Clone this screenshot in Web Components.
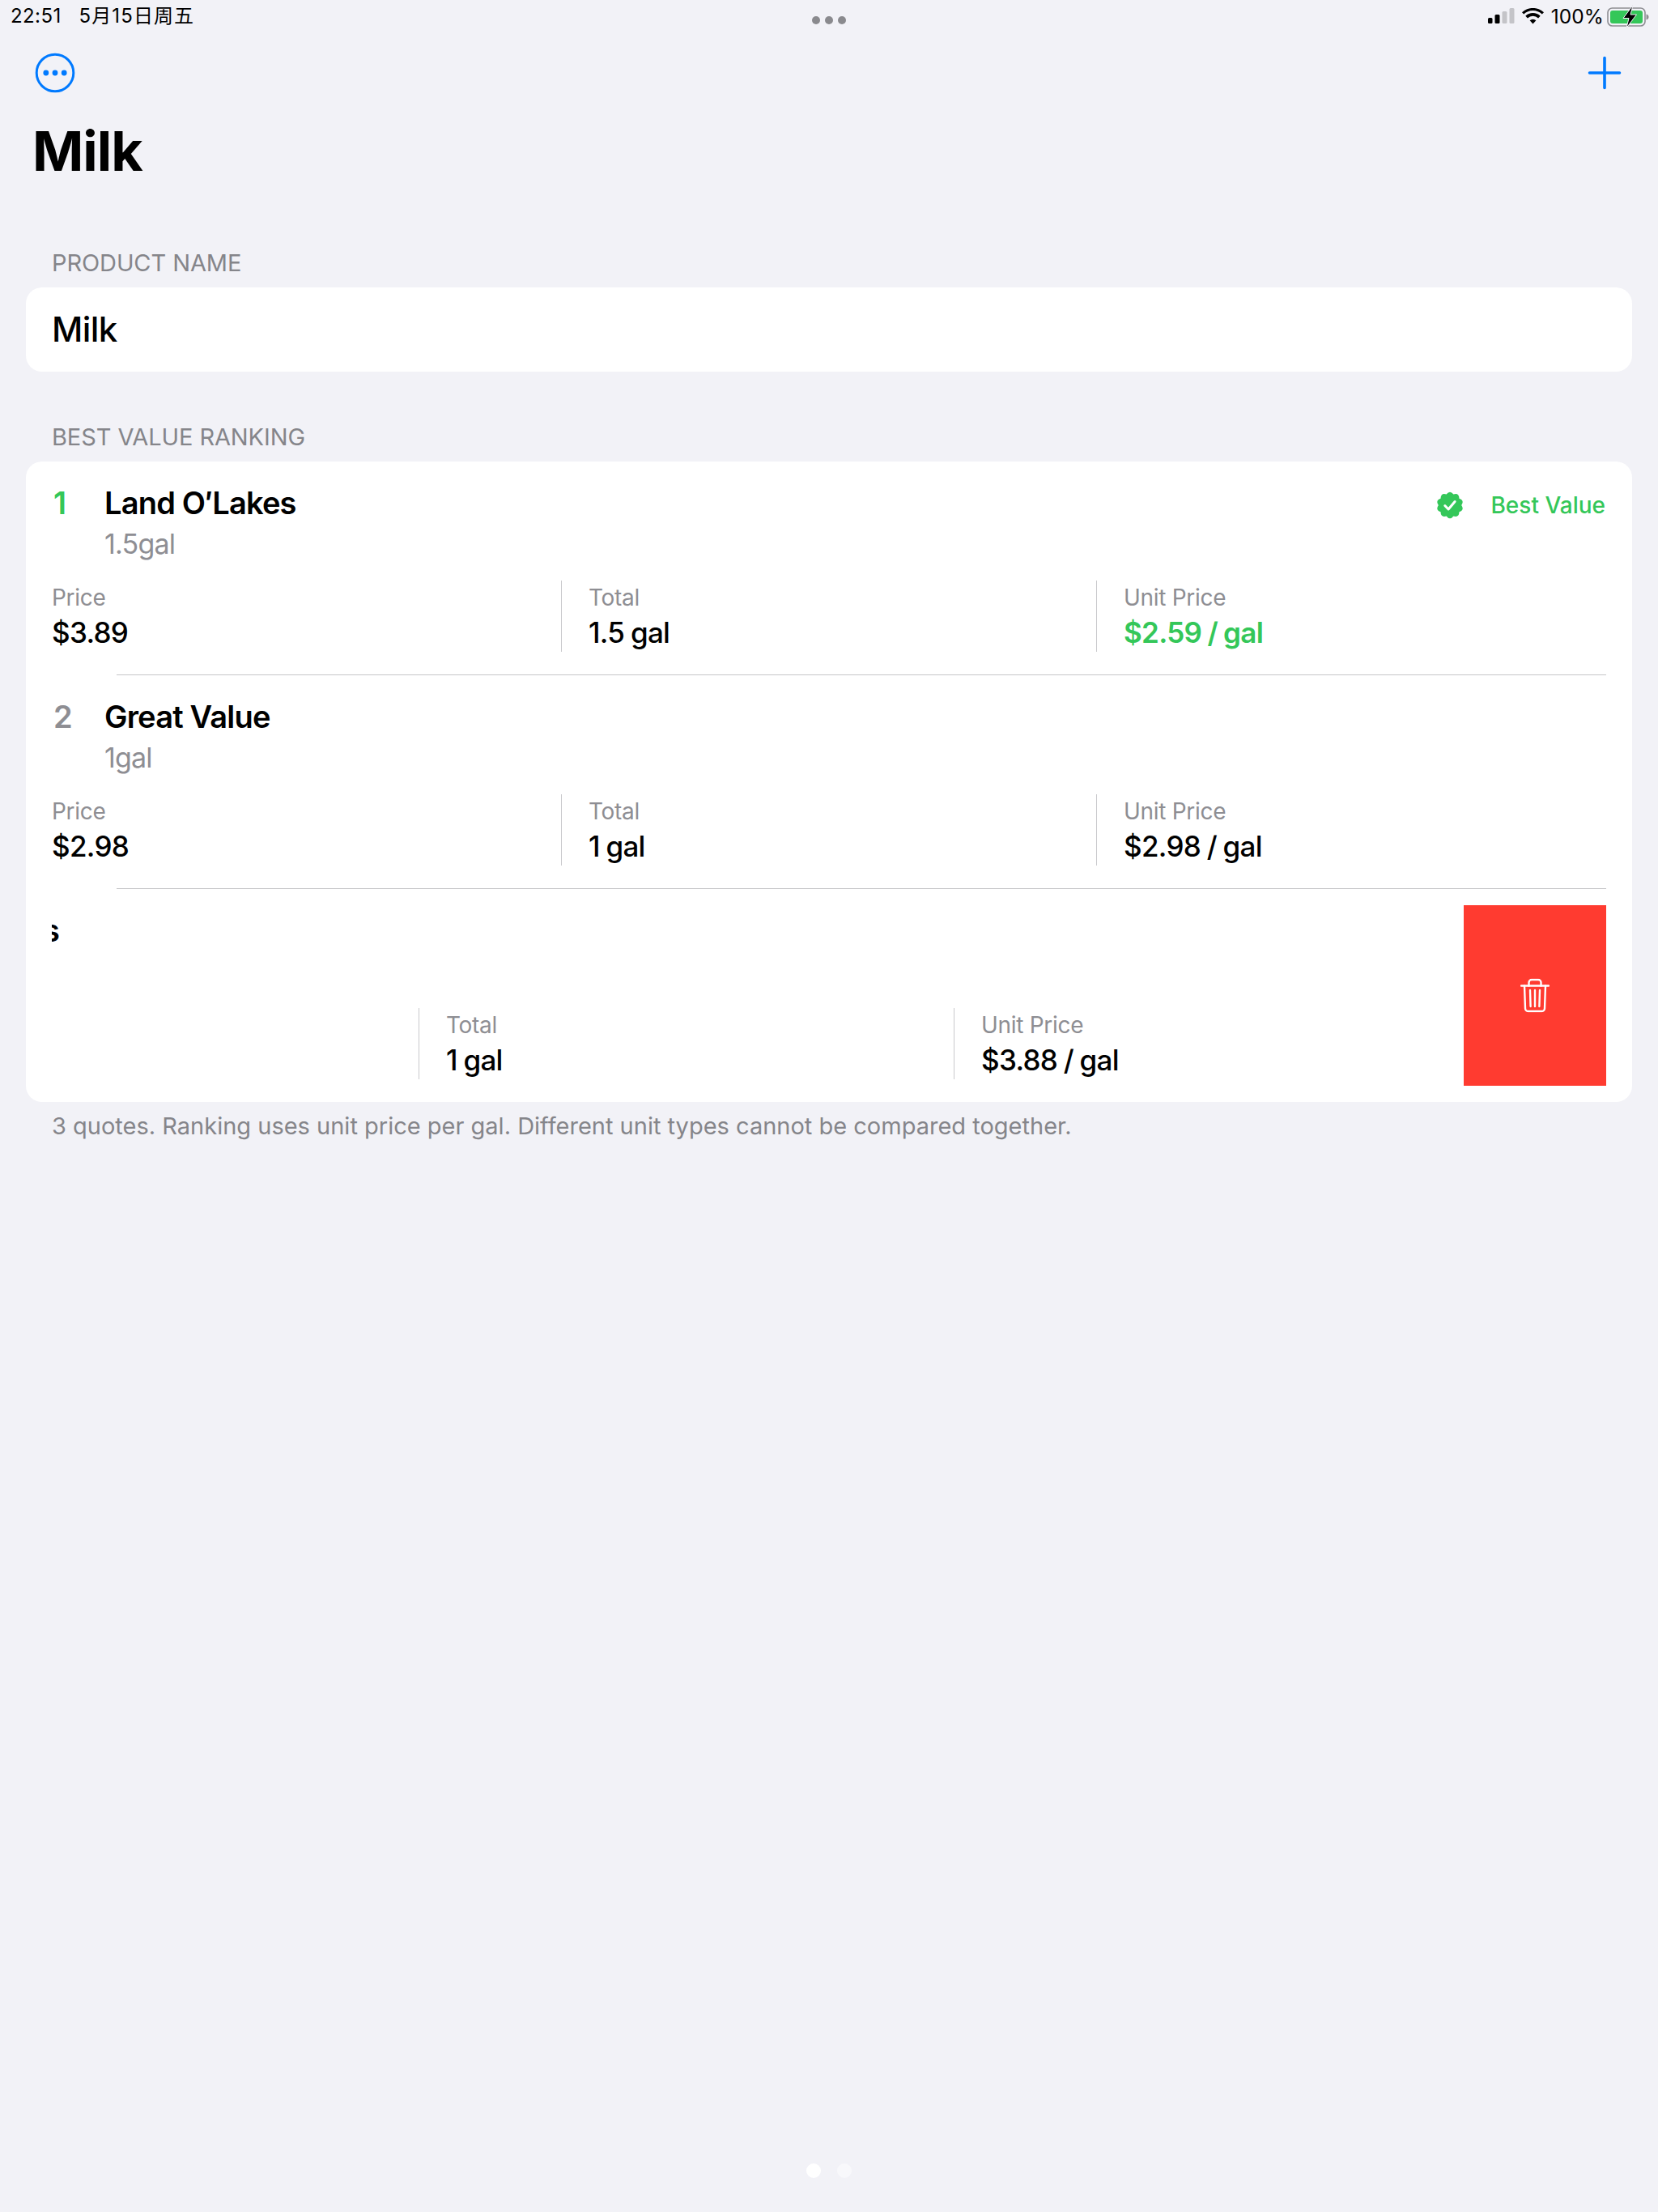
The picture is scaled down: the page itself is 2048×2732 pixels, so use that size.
<!DOCTYPE html>
<html lang="en"><head><meta charset="utf-8"><title>Milk</title>
<style>
html,body{margin:0;padding:0;background:#f2f2f7}
body{font-family:Inter,"Noto Sans CJK SC",sans-serif;color:#000}
</style></head>
<body>
<app-page>
  <status-bar slot="status"></status-bar>
  <nav-bar slot="nav"></nav-bar>
  <large-title>Milk</large-title>
  <form-section heading="PRODUCT NAME"><name-field>Milk</name-field></form-section>
  <form-section heading="BEST VALUE RANKING" class="second" footer="3 quotes. Ranking uses unit price per gal. Different unit types cannot be compared together.">
    <quote-row rank="1" name="Land O′Lakes" sub="1.5gal" price="$3.89" total="1.5 gal" unit="$2.59 / gal" best></quote-row>
    <quote-row rank="2" name="Great Value" sub="1gal" price="$2.98" total="1 gal" unit="$2.98 / gal"></quote-row>
    <swiped-row total="1 gal" unit="$3.88 / gal" clipped="s"></swiped-row>
  </form-section>
</app-page>
<script>
const el=(name,css,html,setup)=>{customElements.define(name,class extends HTMLElement{
  connectedCallback(){ if(this.shadowRoot) return;
    const a=n=>this.getAttribute(n)??'';
    const s=this.attachShadow({mode:'open'});
    s.innerHTML='<style>'+css+'</style>'+(typeof html==='function'?html(a,this):html);
    if(setup) setup(s,this);
  }});};

el('app-page',`:host{display:flex;flex-direction:column;min-height:2732px;box-sizing:border-box;background:#f2f2f7}
 .dots{margin-top:auto;display:flex;justify-content:center;gap:20px;padding:0 0 42px 0;transform:none}
 .dots i{width:18px;height:18px;border-radius:50%;background:#fff;display:block}
 .dots i+i{background:#f8f8fb}`,
 `<slot name="status"></slot><slot name="nav"></slot><slot></slot><div class="dots"><i></i><i></i></div>`);

el('status-bar',`:host{display:flex;align-items:center;height:40px;font-size:24px;line-height:40px;position:relative}
 .l{margin-left:13px;letter-spacing:.4px}.d{margin-left:22px;letter-spacing:1.100px}
 .m{position:absolute;left:1003px;top:20px;display:flex;gap:6px}
 .m i{width:10px;height:10px;border-radius:50%;background:#8a8a8e}
 .r{margin-left:auto;display:flex;align-items:center;margin-right:11px}
 svg{display:block}.p{margin:0 4px 0 9px;font-size:24.500px;letter-spacing:.1px}`,
 `<span class="l">22:51</span><span class="d">5月15日周五</span><div class="m"><i></i><i></i><i></i></div>
 <div class="r">
 <svg width="34" height="22" viewBox="0 0 34 22"><rect x="1" y="13" width="5.5" height="7" rx="1.5"/><rect x="9.5" y="9" width="6" height="11" rx="1.5"/><rect x="18.5" y="5" width="6" height="15" rx="1.5" fill="#c4c4c8"/><rect x="27.5" y="1" width="6" height="19" rx="1.5" fill="#c4c4c8"/></svg>
 <svg style="margin-left:9px" width="27" height="20" viewBox="0 0 27 20"><path d="M13.5 19.5l-3.9-4.2a5.6 5.6 0 0 1 7.8 0zM6.9 12.5l-2.6-2.7a13.3 13.3 0 0 1 18.4 0l-2.6 2.7a9.6 9.6 0 0 0-13.2 0zM2.2 7.6L0 5.3a19.6 19.6 0 0 1 27 0l-2.2 2.3a16.4 16.4 0 0 0-22.6 0z"/></svg>
 <span class="p">100%</span>
 <svg width="52" height="30" viewBox="0 0 52 30"><rect x="1" y="5" width="46" height="22" rx="5.5" fill="none" stroke="#8e8e93" stroke-width="1.6"/><rect x="4" y="8" width="40" height="16" rx="3" fill="#34c759"/><path d="M48.5 12.5c2 .5 3 1.800 3 3.500s-1 3-3 3.500z" fill="#8e8e93"/><path d="M32 1.500L20 17.500h7l-3 12L36.500 13H29z" fill="#000" stroke="#f2f2f7" stroke-width="1"/></svg>
 </div>`);

el('nav-bar',`:host{display:flex;justify-content:space-between;align-items:center;height:100px;padding:0 45px 0 43px}
 svg{display:block}`,
 `<svg width="50" height="50" viewBox="0 0 50 50" fill="#007aff"><circle cx="25" cy="25" r="22.800" fill="none" stroke="#007aff" stroke-width="3"/><circle cx="13.800" cy="25" r="3.400"/><circle cx="25" cy="25" r="3.400"/><circle cx="36.200" cy="25" r="3.400"/></svg>
 <svg width="42" height="42" viewBox="0 0 42 42" fill="none" stroke="#007aff" stroke-width="3.600" stroke-linecap="round"><path d="M21 2.500v37M2.500 21h37"/></svg>`);

el('large-title',`:host{display:block;padding-left:40px;font-size:68px;line-height:92px;font-weight:700;letter-spacing:-1px}`,`<slot></slot>`);

el('form-section',`:host{display:block;padding:75px 32px 0}
 :host(.second){padding-top:63px}
 .h{font-size:29px;line-height:36px;color:#85858a;padding:0 0 12px 32px;letter-spacing:-.1px}
 .c{background:#fff;border-radius:20px;position:relative;overflow:hidden}
 .f{font-size:29px;line-height:36px;color:#85858a;padding:12px 32px 0;letter-spacing:0}`,
 (a)=>`<div class="h">${a('heading')}</div><div class="c"><slot></slot></div>${a('footer')?`<div class="f">${a('footer')}</div>`:''}`);

el('name-field',`:host{display:block;height:104px;padding-left:32px;font-size:42px;line-height:104px;font-weight:500;letter-spacing:-.6px}`,`<slot></slot>`);

el('seal-icon',`:host{display:block;width:34px;height:34px}svg{display:block}`,()=>{
  let d='';const n=10,R=17,r=14.200;
  for(let i=0;i<n;i++){const t=i/n*2*Math.PI-Math.PI/2,t1=(i+.5)/n*2*Math.PI-Math.PI/2;
    const p=(rad,an)=>(17+rad*Math.cos(an)).toFixed(2)+' '+(17+rad*Math.sin(an)).toFixed(2);
    if(i===0)d+='M'+p(r,t-Math.PI/n);
    d+='Q'+p(R+2.2,t)+' '+p(r,t1);}
  return `<svg width="34" height="34" viewBox="0 0 34 34"><path d="${d}Z" fill="#34c759"/><path d="M10.800 17.500l4.300 4.500 8-9.500" fill="none" stroke="#fff" stroke-width="3" stroke-linecap="round" stroke-linejoin="round"/></svg>`;});

el('stat-cell',`:host{display:block;height:88px;box-sizing:border-box;padding-top:2px;overflow:visible;white-space:nowrap}
 :host(.div){border-left:1.500px solid #c9c9cc;padding-left:33px}
 .l{font-size:28px;line-height:38px;color:#8e8e93;letter-spacing:-.3px}
 .v{font-size:35px;line-height:46px;font-weight:500;margin-top:1px;letter-spacing:-.7px;word-spacing:-1px}
 :host(.good) .v{color:#34c759;font-weight:600}`,
 (a)=>`<div class="l">${a('label')}</div><div class="v">${a('value')}</div>`);

el('stat-grid',`:host{display:grid;grid-template-columns:629px 661px 1fr}`,`<slot></slot>`);

el('quote-row',`:host{display:block;padding:28px 32px 0}
 .top{display:flex;height:46px;align-items:center}
 .n{width:65px;font-size:38px;line-height:46px;font-weight:600;padding-left:2px;box-sizing:border-box;color:#8e8e93}
 :host([best]) .n{color:#34c759}
 .name{font-size:38px;line-height:46px;font-weight:600;letter-spacing:-.8px}
 .b{margin-left:auto;display:flex;align-items:center;color:#34c759;font-size:28px;font-weight:500;letter-spacing:0;gap:33px;margin-right:1px}
 .b span{position:relative;top:3px}.b seal-icon{position:relative;top:3px}
 .s{padding-left:65px;font-size:34px;line-height:44px;color:#8e8e93;margin-top:6px;letter-spacing:-.8px}
 stat-grid{margin-top:23px}
 .sep{height:1px;background:#c6c6c8;margin:28px 0 0 80px}`,
 (a,h)=>`<div class="top"><div class="n">${a('rank')}</div><div class="name">${a('name')}</div>${h.hasAttribute('best')?'<div class="b"><seal-icon></seal-icon><span>Best Value</span></div>':''}</div>
 <div class="s">${a('sub')}</div>
 <stat-grid><stat-cell label="Price" value="${a('price')}"></stat-cell><stat-cell class="div" label="Total" value="${a('total')}"></stat-cell><stat-cell class="div ${h.hasAttribute('best')?'good':''}" label="Unit Price" value="${a('unit')}"></stat-cell></stat-grid>
 <div class="sep"></div>`);

el('swiped-row',`:host{display:block;padding:28px 32px 28px;position:relative}
 .clip{overflow:hidden;height:207px}
 .top{height:46px;font-size:38px;line-height:46px;font-weight:600;margin-left:-11px}
 .gap{height:73px}
 stat-grid{margin-left:-176px;width:1920px}
 .del{position:absolute;right:32px;top:20px;width:176px;height:223px;background:#ff3b30;display:flex;align-items:center;justify-content:center}
 svg{display:block;transform:translateY(-.5px)}`,
 (a)=>`<div class="clip"><div class="top">${a('clipped')}</div><div class="gap"></div>
 <stat-grid><div></div><stat-cell class="div" label="Total" value="${a('total')}"></stat-cell><stat-cell class="div" label="Unit Price" value="${a('unit')}"></stat-cell></stat-grid></div>
 <div class="del"><svg width="36" height="42" viewBox="0 0 36 42" fill="none" stroke="#fff" stroke-width="2.400" stroke-linecap="round" stroke-linejoin="round"><path d="M1 9h34"/><path d="M10.500 9V5a3.500 3.500 0 0 1 3.500-3.500h8A3.500 3.500 0 0 1 25.500 5v4"/><path d="M5 9l1 28a3.500 3.500 0 0 0 3.500 3.500h17A3.500 3.500 0 0 0 30 37l1-28"/><path d="M12 14.500l.6 20M18 14.500v20M24 14.500l-.6 20"/></svg></div>`);
</script>
</body></html>
